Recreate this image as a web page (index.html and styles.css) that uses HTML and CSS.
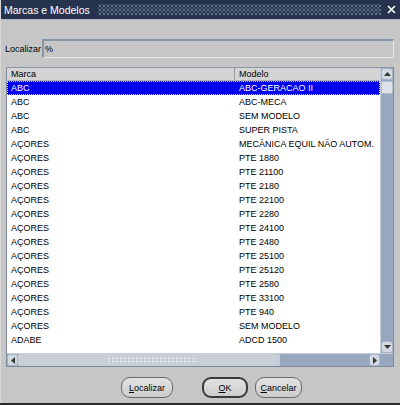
FILE: index.html
```html
<!DOCTYPE html>
<html>
<head>
<meta charset="utf-8">
<link rel="stylesheet" href="styles.css">
</head>
<body>
<div class="window">
  <div class="titlebar">
    <span class="title">Marcas e Modelos</span>
    <span class="grip"></span>
    <svg class="close" width="9" height="9" viewBox="0 0 9 9"><path d="M1 1 L8 8 M8 1 L1 8" stroke="#fff" stroke-width="1.6"/></svg>
  </div>
  <div class="find-row">
    <span class="find-label">Localizar</span>
    <div class="find-input">%</div>
  </div>
  <div class="list">
    <div class="list-main">
      <div class="list-body">
        <div class="header">
          <div class="hcell c1">Marca</div>
          <div class="hcell c2">Modelo</div>
        </div>
        <div class="rows">
          <div class="row sel"><span class="c1">ABC</span><span class="c2">ABC-GERACAO II</span></div>
          <div class="row"><span class="c1">ABC</span><span class="c2">ABC-MECA</span></div>
          <div class="row"><span class="c1">ABC</span><span class="c2">SEM MODELO</span></div>
          <div class="row"><span class="c1">ABC</span><span class="c2">SUPER PISTA</span></div>
          <div class="row"><span class="c1">AÇORES</span><span class="c2">MECÂNICA EQUIL NÃO AUTOM.</span></div>
          <div class="row"><span class="c1">AÇORES</span><span class="c2">PTE 1880</span></div>
          <div class="row"><span class="c1">AÇORES</span><span class="c2">PTE 21100</span></div>
          <div class="row"><span class="c1">AÇORES</span><span class="c2">PTE 2180</span></div>
          <div class="row"><span class="c1">AÇORES</span><span class="c2">PTE 22100</span></div>
          <div class="row"><span class="c1">AÇORES</span><span class="c2">PTE 2280</span></div>
          <div class="row"><span class="c1">AÇORES</span><span class="c2">PTE 24100</span></div>
          <div class="row"><span class="c1">AÇORES</span><span class="c2">PTE 2480</span></div>
          <div class="row"><span class="c1">AÇORES</span><span class="c2">PTE 25100</span></div>
          <div class="row"><span class="c1">AÇORES</span><span class="c2">PTE 25120</span></div>
          <div class="row"><span class="c1">AÇORES</span><span class="c2">PTE 2580</span></div>
          <div class="row"><span class="c1">AÇORES</span><span class="c2">PTE 33100</span></div>
          <div class="row"><span class="c1">AÇORES</span><span class="c2">PTE 940</span></div>
          <div class="row"><span class="c1">AÇORES</span><span class="c2">SEM MODELO</span></div>
          <div class="row"><span class="c1">ADABE</span><span class="c2">ADCD 1500</span></div>
        </div>
      </div>
      <div class="vscroll">
        <div class="sbtn up"><svg width="7" height="4" viewBox="0 0 7 4"><path d="M0 4 L3.5 0 L7 4 Z" fill="#333"/></svg></div>
        <div class="vthumb"></div>
        <div class="vtrack"></div>
        <div class="sbtn down"><svg width="7" height="4" viewBox="0 0 7 4"><path d="M0 0 L3.5 4 L7 0 Z" fill="#333"/></svg></div>
      </div>
    </div>
    <div class="hscroll">
      <div class="sbtn left"><svg width="4" height="7" viewBox="0 0 4 7"><path d="M4 0 L0 3.5 L4 7 Z" fill="#333"/></svg></div>
      <div class="hthumb"><span class="hgrip"></span></div>
      <div class="htrack"></div>
      <div class="sbtn right"><svg width="4" height="7" viewBox="0 0 4 7"><path d="M0 0 L4 3.5 L0 7 Z" fill="#333"/></svg></div>
      <div class="corner"></div>
    </div>
  </div>
  <div class="buttons">
    <div class="btn b-find"><u>L</u>ocalizar</div>
    <div class="btn b-ok default"><u>O</u>K</div>
    <div class="btn b-cancel"><u>C</u>ancelar</div>
  </div>
</div>
</body>
</html>
```
FILE: styles.css
```css
html, body {
  margin: 0;
  padding: 0;
  background: #2a2a2a;
}
.window {
  width: 400px;
  height: 403px;
  background: #c6c6c6;
  font-family: "Liberation Sans", Arial, sans-serif;
  font-size: 9px;
  color: #000;
  display: flex;
  flex-direction: column;
  overflow: hidden;
  box-sizing: border-box;
  border-left: 1px solid #d8d8d8;
}
.titlebar {
  height: 20px;
  background: #26334f;
  display: flex;
  align-items: center;
  padding: 0 4px 0 3px;
  box-sizing: border-box;
  border-bottom: 1px solid #b0b8c4;
}
.title {
  color: #fff;
  font-size: 10.5px;
  white-space: nowrap;
}
.grip {
  flex: 1;
  height: 11px;
  margin: 0 6px 0 8px;
  background-image:
    radial-gradient(circle, #8796b0 0.6px, transparent 0.9px),
    radial-gradient(circle, #64748f 0.6px, transparent 0.9px);
  background-size: 4px 4px, 4px 4px;
  background-position: 0 0, 2px 2px;
}
.close {
  flex: none;
}
.find-row {
  display: flex;
  align-items: center;
  margin: 19px 6px 0 4px;
  height: 19px;
}
.find-label {
  width: 37px;
}
.find-input {
  flex: 1;
  height: 19px;
  box-sizing: border-box;
  border: 1px solid #e8e8e8;
  border-top: 2px solid #8996a6;
  border-left: 2px solid #8996a6;
  padding: 3px 0 0 1px;
}
.list {
  margin: 9px 6px 0 5px;
  height: 300px;
  box-sizing: border-box;
  border: 1px solid #7d8a9c;
  border-top-color: #8a96a6;
  background: #fff;
  display: flex;
  flex-direction: column;
}
.list-main {
  flex: 1;
  display: flex;
  min-height: 0;
}
.list-body {
  flex: 1;
  display: flex;
  flex-direction: column;
  overflow: hidden;
  min-width: 0;
}
.header {
  display: flex;
  height: 13px;
  background: #d4d4d4;
  border-bottom: 1px solid #b0b0b0;
  box-sizing: border-box;
}
.hcell {
  line-height: 12px;
  padding-left: 4px;
  box-sizing: border-box;
}
.hcell.c1 {
  width: 228px;
  flex: none;
  border-right: 1px solid #9a9a9a;
}
.hcell.c2 {
  flex: 1;
}
.rows {
  flex: 1;
}
.row {
  display: flex;
  height: 14px;
  line-height: 14px;
  white-space: nowrap;
}
.row .c1 {
  width: 228px;
  flex: none;
  padding-left: 4px;
  box-sizing: border-box;
}
.row .c2 {
  flex: 1;
  padding-left: 4px;
  overflow: hidden;
}
.row.sel {
  background: #0000f0;
  color: #fff;
  outline: 1px dotted #c0c0ff;
  outline-offset: -1px;
}
.vscroll {
  width: 12px;
  background: #97a7bd;
  display: flex;
  flex-direction: column;
  border-left: 1px solid #c8ced8;
}
.sbtn {
  width: 12px;
  height: 12px;
  background: #d3d9e2;
  border-radius: 3px;
  box-sizing: border-box;
  border: 1px solid #a9b5c6;
  display: flex;
  align-items: center;
  justify-content: center;
  flex: none;
}
.vthumb {
  height: 11px;
  margin-top: 1px;
  background: #dde2ea;
  border-radius: 2px;
  border: 1px solid #b4bfcd;
}
.vtrack {
  flex: 1;
}
.hscroll {
  height: 12px;
  display: flex;
  background: #97a7bd;
  border-top: 1px solid #c8ced8;
}
.sbtn.left, .sbtn.right {
  height: 12px;
  width: 11px;
}
.hthumb {
  width: 262px;
  background: #c9cfd8;
  border-radius: 2px;
  display: flex;
  align-items: center;
  justify-content: flex-end;
  padding-right: 83px;
  box-sizing: border-box;
}
.hgrip {
  width: 90px;
  height: 6px;
  background-image: radial-gradient(circle, #eef1f5 0.7px, transparent 1px);
  background-size: 4px 3px;
}
.htrack {
  flex: 1;
}
.corner {
  width: 13px;
  background: #97a7bd;
}
.buttons {
  display: flex;
  margin: 10px 0 0 120px;
  height: 21px;
}
.btn {
  height: 21px;
  box-sizing: border-box;
  border: 1px solid #6a6a6a;
  border-radius: 9px;
  background: linear-gradient(#e2e2e2, #cdcdcd);
  display: flex;
  align-items: center;
  justify-content: center;
}
.b-find {
  width: 52px;
}
.b-ok {
  width: 46px;
  margin-left: 29px;
}
.b-ok.default {
  border: 2px solid #3a3a3a;
}
.b-cancel {
  width: 47px;
  margin-left: 7px;
}
```
